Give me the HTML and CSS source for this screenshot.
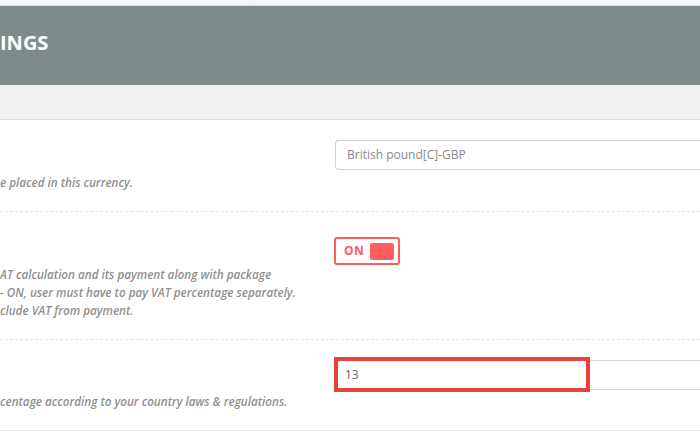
FILE: index.html
```html
<!DOCTYPE html>
<html>
<head>
<meta charset="utf-8">
<link rel="stylesheet" href="styles.css">
</head>
<body>
<div class="topbar"></div>
<header class="page-head"><h1 class="page-title">INGS</h1></header>
<div class="subbar"></div>
<main class="settings">
  <div class="row">
    <div class="label-col"><p class="desc">e placed in this currency.</p></div>
    <div class="ctrl-col"><div class="select">British pound[C]-GBP</div></div>
  </div>
  <div class="row">
    <div class="label-col"><p class="desc">AT calculation and its payment along with package<br>- ON, user must have to pay VAT percentage separately.<br>clude VAT from payment.</p></div>
    <div class="ctrl-col"><div class="toggle"><span class="toggle-text">ON</span><span class="knob"></span></div></div>
  </div>
  <div class="row row-last">
    <div class="label-col"><p class="desc">centage according to your country laws &amp; regulations.</p></div>
    <div class="ctrl-col"><div class="input-wrap"><div class="input">13</div><div class="highlight"></div></div></div>
  </div>
</main>
</body>
</html>
```
FILE: styles.css
```css
html, body { margin: 0; padding: 0; }
body {
  width: 700px;
  height: 432px;
  overflow: hidden;
  background: #fff;
  font-family: "Open Sans", "Liberation Sans", sans-serif;
}
.topbar {
  height: 5px;
  background: linear-gradient(#fafafa, #efefef);
  border-bottom: 1px solid #dcdcdc;
}
.page-head {
  height: 79px;
  background: #7f8b8a;
  display: flex;
  align-items: center;
}
.page-title {
  margin: 0;
  color: #fff;
  font-size: 20px;
  font-weight: 700;
  line-height: 1;
  padding-bottom: 5px;
}
.subbar {
  height: 34px;
  background: #f0f0f0;
  border-bottom: 1px solid #dedede;
}
.row {
  display: grid;
  grid-template-columns: 335px 1fr;
  padding: 20px 0;
  border-bottom: 1px dashed #e3e3e3;
}
.row-last { border-bottom: 1px solid #e6e6e6; }
.desc {
  margin: 33px 0 0;
  font-size: 11.7px;
  font-style: italic;
  font-weight: 600;
  line-height: 18px;
  color: #8f8f8f;
  white-space: nowrap;
}
.row-last .desc { margin-top: 32px; }
.select {
  height: 28px;
  border: 1px solid #d2d2d2;
  border-right: none;
  border-radius: 4px 0 0 4px;
  padding-left: 11px;
  font-size: 12px;
  line-height: 28px;
  color: #8a8a8a;
}
.toggle {
  margin: 5px 0 0 -1px;
  width: 50px;
  height: 24px;
  border: 2px solid #ff5a5c;
  border-radius: 3px;
  display: flex;
  align-items: center;
  justify-content: space-between;
  padding: 0 4px 0 8px;
  box-sizing: content-box;
}
.toggle-text {
  color: #ff5a5c;
  font-size: 12px;
  font-weight: 700;
  letter-spacing: 0.5px;
  line-height: 1;
}
.knob {
  width: 24px;
  height: 17px;
  background: #ff5f61;
  border-radius: 2px;
}
.input-wrap { position: relative; }
.input {
  height: 28px;
  border: 1px solid #d4d4d4;
  border-right: none;
  padding-left: 9px;
  font-size: 12px;
  line-height: 28px;
  color: #666;
}
.highlight {
  position: absolute;
  left: -1px;
  top: -3px;
  width: 248px;
  height: 27px;
  border: 4px solid #e7433b;
}
```
